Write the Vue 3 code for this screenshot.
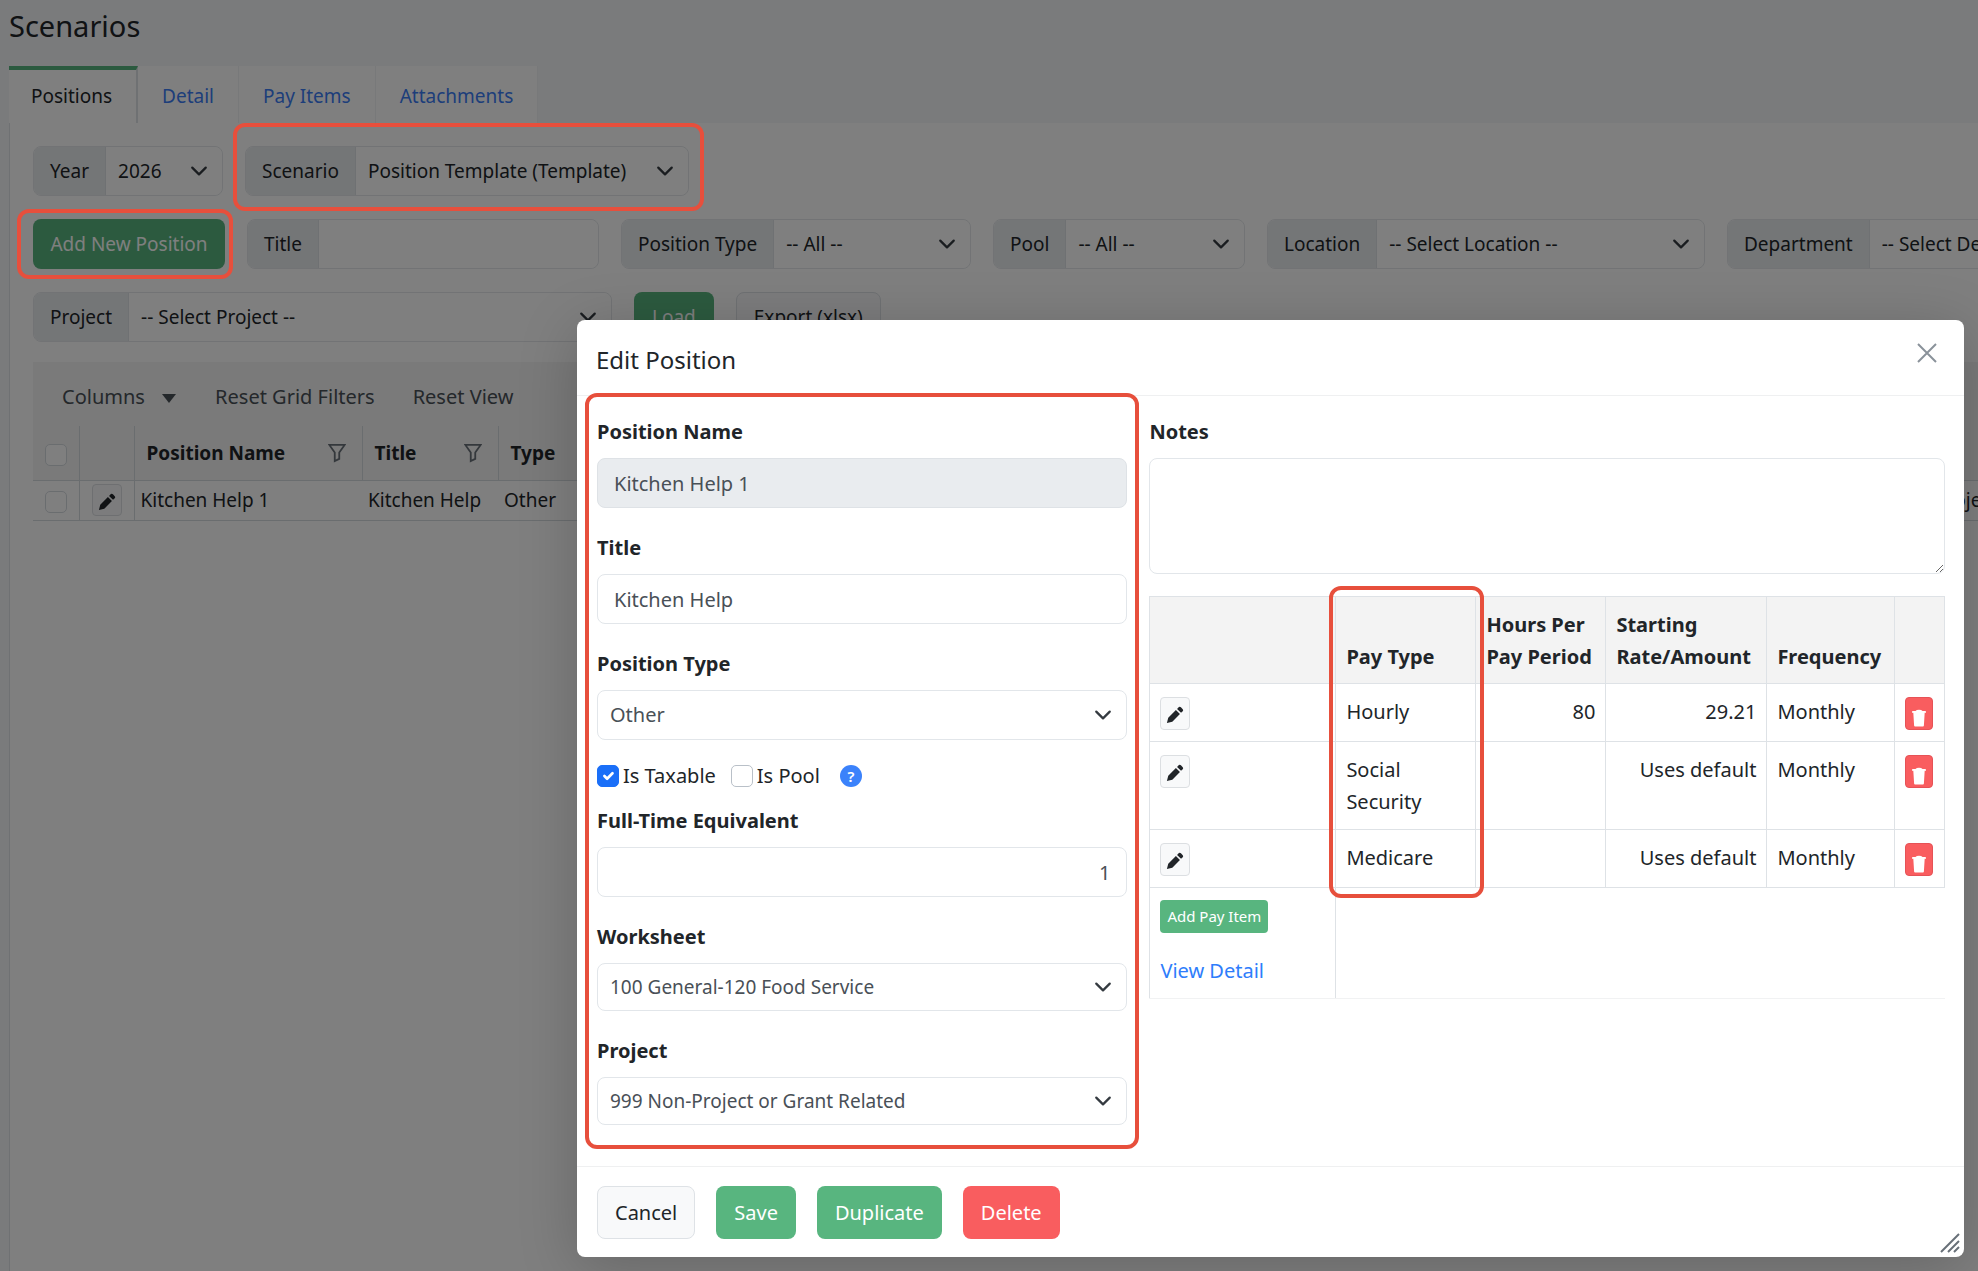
<script setup>
import { ref } from 'vue'

const tabs = ['Positions', 'Detail', 'Pay Items', 'Attachments']
const activeTab = ref('Positions')

const taxable = ref(true)
const pool = ref(false)
const title = ref('Kitchen Help')
const fte = ref('1')
const notes = ref('')

const payItems = [
  { type: 'Hourly', hours: '80', rate: '29.21', frequency: 'Monthly' },
  { type: 'Social Security', hours: '', rate: 'Uses default', frequency: 'Monthly' },
  { type: 'Medicare', hours: '', rate: 'Uses default', frequency: 'Monthly' }
]
</script>

<template>
  <div class="page">
    <h1>Scenarios</h1>
    <nav class="tabs">
      <a v-for="t in tabs" :key="t" href="#" :class="['tab', { active: t === activeTab }]" @click.prevent="activeTab = t">{{ t }}</a>
    </nav>

    <main class="panel">
      <div class="row">
        <div class="group year">
          <label for="year">Year</label>
          <select id="year"><option>2026</option></select>
        </div>
        <div class="group scenario">
          <label for="scenario">Scenario</label>
          <select id="scenario"><option>Position Template (Template)</option></select>
          <span class="mark mark-scenario"></span>
        </div>
      </div>

      <div class="row">
        <div class="add">
          <button type="button" class="btn green">Add New Position</button>
          <span class="mark mark-add"></span>
        </div>
        <div class="group title">
          <label for="f-title">Title</label>
          <input id="f-title" type="text">
        </div>
        <div class="group ptype">
          <label for="f-type">Position Type</label>
          <select id="f-type"><option>-- All --</option></select>
        </div>
        <div class="group pool">
          <label for="f-pool">Pool</label>
          <select id="f-pool"><option>-- All --</option></select>
        </div>
        <div class="group location">
          <label for="f-location">Location</label>
          <select id="f-location"><option>-- Select Location --</option></select>
        </div>
        <div class="group department">
          <label for="f-department">Department</label>
          <select id="f-department"><option>-- Select Department --</option></select>
        </div>
      </div>

      <div class="row">
        <div class="group project">
          <label for="f-project">Project</label>
          <select id="f-project"><option>-- Select Project --</option></select>
        </div>
        <button type="button" class="btn green">Load</button>
        <button type="button" class="btn light">Export (xlsx)</button>
      </div>

      <div class="toolbar">
        <button type="button" class="plain">Columns
          <svg width="16" height="10" viewBox="0 0 16 10"><path d="M1 0h14L8 9z" fill="currentColor" /></svg>
        </button>
        <button type="button" class="plain">Reset Grid Filters</button>
        <button type="button" class="plain">Reset View</button>
      </div>
      <table class="grid">
        <thead>
          <tr>
            <th class="c-check"><input type="checkbox" aria-label="Select all"></th>
            <th class="c-edit"></th>
            <th class="c-name"><span class="head">Position Name
              <svg width="18" height="20" viewBox="0 0 20 21"><path d="M1.500 1.500h17l-6 8.500v7l-5 2.500V10z" /></svg></span></th>
            <th class="c-title"><span class="head">Title
              <svg width="18" height="20" viewBox="0 0 20 21"><path d="M1.500 1.500h17l-6 8.500v7l-5 2.500V10z" /></svg></span></th>
            <th class="c-type"><span class="head">Type</span></th>
            <th class="c-project"></th>
          </tr>
        </thead>
        <tbody>
          <tr>
            <td class="c-check"><input type="checkbox" aria-label="Select row"></td>
            <td class="c-edit">
              <button type="button" class="icon" aria-label="Edit">
                <svg width="18" height="18" viewBox="0 0 20 20"><path d="M1 19l1.500-6L11 4.500l4.500 4.500L7 17.500zM12.300 3.200l2-2q1.200-.8 2.300.3l2 2q1 1.200 0 2.200l-1.900 1.900z" fill="currentColor" /></svg>
              </button>
            </td>
            <td>Kitchen Help 1</td>
            <td>Kitchen Help</td>
            <td>Other</td>
            <td>999 Non-Project</td>
          </tr>
        </tbody>
      </table>
    </main>

    <div class="backdrop">
      <section class="modal" role="dialog" aria-labelledby="modal-title">
        <header>
          <h2 id="modal-title">Edit Position</h2>
          <button type="button" class="close" aria-label="Close">
            <svg width="20" height="20" viewBox="0 0 20 20"><path d="M1 1l18 18M19 1L1 19" stroke="currentColor" stroke-width="2" /></svg>
          </button>
        </header>

        <div class="body">
          <form class="form" @submit.prevent>
            <span class="mark mark-form"></span>
            <div class="field">
              <label for="name">Position Name</label>
              <input id="name" type="text" value="Kitchen Help 1" readonly>
            </div>
            <div class="field">
              <label for="title">Title</label>
              <input id="title" v-model="title" type="text">
            </div>
            <div class="field">
              <label for="type">Position Type</label>
              <select id="type"><option>Other</option></select>
            </div>
            <div class="checks">
              <label><input v-model="taxable" type="checkbox">Is Taxable</label>
              <label><input v-model="pool" type="checkbox">Is Pool</label>
              <button type="button" class="help" aria-label="Help">?</button>
            </div>
            <div class="field">
              <label for="fte">Full-Time Equivalent</label>
              <input id="fte" v-model="fte" type="text" class="num">
            </div>
            <div class="field">
              <label for="worksheet">Worksheet</label>
              <select id="worksheet" class="compact"><option>100 General-120 Food Service</option></select>
            </div>
            <div class="field">
              <label for="project">Project</label>
              <select id="project" class="compact"><option>999 Non-Project or Grant Related</option></select>
            </div>
          </form>

          <div class="side">
            <div class="field notes">
              <label for="notes">Notes</label>
              <textarea id="notes" v-model="notes"></textarea>
            </div>
            <div class="pay-wrap">
              <table class="pay">
                <colgroup>
                  <col class="w-edit"><col class="w-type"><col class="w-hours"><col class="w-rate"><col class="w-freq"><col>
                </colgroup>
                <thead>
                  <tr>
                    <th></th>
                    <th>Pay Type</th>
                    <th>Hours Per Pay Period</th>
                    <th>Starting Rate/Amount</th>
                    <th>Frequency</th>
                    <th></th>
                  </tr>
                </thead>
                <tbody>
                  <tr v-for="p in payItems" :key="p.type">
                    <td class="act">
                      <button type="button" class="icon" aria-label="Edit">
                        <svg width="18" height="18" viewBox="0 0 20 20"><path d="M1 19l1.500-6L11 4.500l4.500 4.500L7 17.500zM12.300 3.200l2-2q1.200-.8 2.300.3l2 2q1 1.200 0 2.200l-1.900 1.900z" fill="currentColor" /></svg>
                      </button>
                    </td>
                    <td>{{ p.type }}</td>
                    <td class="num">{{ p.hours }}</td>
                    <td class="num">{{ p.rate }}</td>
                    <td>{{ p.frequency }}</td>
                    <td class="act">
                      <button type="button" class="trash" aria-label="Delete">
                        <svg width="16" height="18" viewBox="0 0 16 18"><path d="M1 3q0-.8.800-1H4.500q1-1.300 3.500-1.300t3.500 1.300h2.700q.8.200.8 1v.8H1zM2.300 3.500h11.400l-.8 13q0 1-1 1H4.100q-1 0-1-1z" fill="#fff" /></svg>
                      </button>
                    </td>
                  </tr>
                </tbody>
                <tfoot>
                  <tr>
                    <td>
                      <button type="button" class="add-item">Add Pay Item</button>
                      <a href="#" @click.prevent>View Detail</a>
                    </td>
                    <td colspan="5"></td>
                  </tr>
                </tfoot>
              </table>
              <span class="mark mark-pay"></span>
            </div>
          </div>
        </div>

        <footer>
          <button type="button" class="btn light">Cancel</button>
          <button type="button" class="btn green">Save</button>
          <button type="button" class="btn green">Duplicate</button>
          <button type="button" class="btn red">Delete</button>
          <svg class="grip" width="20" height="20" viewBox="0 0 20 20"><path d="M1 19L19 1M8 19L19 8M14 19l5-5" stroke="#687078" stroke-width="2" /></svg>
        </footer>
      </section>
    </div>
  </div>
</template>

<style>
body {
  margin: 0;
}
</style>

<style scoped>
* {
  box-sizing: border-box;
}

.page {
  position: relative;
  min-height: 100vh;
  padding: 8px 0 0 9px;
  overflow: hidden;
  background: #f4f6f9;
  color: #212529;
  font: 19px/32px "Noto Sans", "Open Sans", sans-serif;
  display: flex;
  flex-direction: column;
}

button, input, select, textarea {
  font: inherit;
  color: inherit;
  margin: 0;
}

h1 {
  margin: 0 0 22px;
  font-size: 29px;
  line-height: 36px;
  font-weight: 400;
}

.tabs {
  display: flex;
}

.tab {
  height: 57px;
  padding: 14px 24px 0;
  background: #fff;
  border-right: 1px solid #f0f2f4;
  color: #3b7cf5;
  text-decoration: none;
  line-height: 32px;
}

.tab.active {
  padding-top: 10px;
  padding-left: 22px;
  border-top: 4px solid #57b47e;
  border-right: 2px solid #dee2e6;
  color: #212529;
}

.panel {
  flex: 1;
  padding: 23px 0 0 23px;
  background: #fff;
  border-left: 1px solid #dee2e6;
}

.row {
  display: flex;
  gap: 22px;
  height: 50px;
  margin-bottom: 23px;
}

.group {
  position: relative;
  flex: none;
  display: flex;
  border: 1px solid #e4e7ea;
  border-radius: 8px;
}

.group label {
  flex: none;
  padding: 0 16px;
  line-height: 48px;
  background: #e9ecef;
  border-right: 1px solid #dee2e6;
  border-radius: 7px 0 0 7px;
}

.group select,
.group input {
  flex: 1;
  min-width: 0;
  height: 48px;
  padding: 0 12px;
  border: 0;
  border-radius: 0 8px 8px 0;
  background-color: #fff;
}

select {
  appearance: none;
  background-image: url("data:image/svg+xml,%3Csvg xmlns='http://www.w3.org/2000/svg' viewBox='0 0 16 16'%3E%3Cpath fill='none' stroke='%23343a40' stroke-linecap='round' stroke-linejoin='round' stroke-width='2' d='m2 5 6 6 6-6'/%3E%3C/svg%3E");
  background-repeat: no-repeat;
  background-position: right 14px center;
  background-size: 18px 18px;
}

.year { width: 190px; }
.scenario { width: 444px; }
.title { width: 352px; }
.ptype { width: 350px; }
.pool { width: 252px; }
.location { width: 438px; }
.department { width: 440px; }
.project { width: 579px; }

.add {
  position: relative;
  flex: none;
  width: 192px;
}

.btn {
  flex: none;
  height: 50px;
  padding: 0 17px;
  border: 1px solid transparent;
  border-radius: 8px;
  white-space: nowrap;
}

.add .btn {
  width: 100%;
  padding: 0;
}

.green {
  background: #58b57f;
  color: #fff;
}

.red {
  background: #f95d5f;
  color: #fff;
}

.light {
  background: #f8f9fa;
  border-color: #dee2e6;
}

.toolbar {
  display: flex;
  gap: 38px;
  height: 64px;
  margin-top: -3px;
  padding: 6px 29px 0;
  background: #f4f4f4;
  font-size: 20px;
}

.plain {
  padding: 0;
  border: 0;
  background: none;
  color: #495057;
}

.plain svg {
  margin-left: 11px;
}

.grid {
  width: 2100px;
  table-layout: fixed;
  border-collapse: collapse;
  line-height: 30px;
}

.grid th {
  height: 54px;
  padding: 0 16px 0 12px;
  background: #f4f4f4;
  border: 1px solid #d5dadf;
  border-width: 0 1px 1px 0;
  text-align: left;
  font-weight: 700;
}

.grid td {
  height: 40px;
  padding: 0 6px;
  border: 1px solid #d5dadf;
  border-width: 0 0 1px;
  white-space: nowrap;
}

.grid .c-check,
.grid .c-edit {
  border-right-width: 1px;
  padding: 0;
  text-align: center;
}

.c-check { width: 46px; }
.c-edit { width: 55px; }
.c-name { width: 228px; }
.c-title { width: 136px; }
.c-type { width: 1350px; }

.head {
  display: flex;
  align-items: center;
  justify-content: space-between;
}

.head svg {
  fill: none;
  stroke: #687078;
  stroke-width: 2;
}

input[type="checkbox"] {
  appearance: none;
  width: 22px;
  height: 22px;
  border: 1px solid #b9c0c8;
  border-radius: 5px;
  background: #fff;
  vertical-align: middle;
}

.grid input[type="checkbox"] {
  border-color: #d5dadf;
}

input[type="checkbox"]:checked {
  border-color: #1a6ff8;
  background: #1a6ff8 url("data:image/svg+xml,%3Csvg xmlns='http://www.w3.org/2000/svg' viewBox='0 0 20 20'%3E%3Cpath fill='none' stroke='%23fff' stroke-linecap='round' stroke-linejoin='round' stroke-width='3' d='m6 10 3 3 6-6'/%3E%3C/svg%3E") center / 18px 18px no-repeat;
}

.icon {
  display: inline-flex;
  align-items: center;
  justify-content: center;
  width: 30px;
  height: 32px;
  padding: 3px 0 0;
  border: 1px solid #dcdfe2;
  border-radius: 4px;
  background: #f8f9fa;
  vertical-align: top;
}

.backdrop {
  position: absolute;
  inset: 0;
  z-index: 10;
  padding: 320px 14px 0 577px;
  background: rgba(0, 0, 0, 0.5);
}

.modal {
  background: #fff;
  border-radius: 8px;
  box-shadow: 0 10px 60px rgba(0, 0, 0, 0.2);
  font-size: 20px;
}

.modal header {
  display: flex;
  justify-content: space-between;
  height: 76px;
  padding: 22px 27px 0 19px;
  border-bottom: 1px solid #eff0f1;
}

h2 {
  margin: 0;
  font-size: 24px;
  line-height: 36px;
  font-weight: 400;
}

.close {
  height: 20px;
  margin-top: 1px;
  padding: 0;
  border: 0;
  background: none;
  color: #8a929a;
  line-height: 0;
}

.body {
  display: grid;
  grid-template-columns: minmax(0, 2fr) minmax(0, 3fr);
  gap: 22px;
  padding: 21px 19px 16px 20px;
}

.form {
  position: relative;
}

.field {
  margin-bottom: 25px;
}

.field label {
  display: block;
  margin-bottom: 11px;
  line-height: 30px;
  font-weight: 700;
}

.field input,
.field select,
.field textarea {
  display: block;
  width: 100%;
  height: 50px;
  padding: 0 16px;
  border: 1px solid #e2e6ea;
  border-radius: 8px;
  background-color: #fff;
  color: #495057;
}

.field input[readonly] {
  background: #e9ecef;
  border-color: #dee2e6;
}

.field select {
  padding: 0 12px;
}

.field .compact {
  height: 48px;
  font-size: 19px;
}

.num {
  text-align: right;
}

.checks {
  display: flex;
  align-items: center;
  gap: 15px;
  height: 22px;
  margin-bottom: 19px;
}

.checks label {
  display: flex;
  align-items: center;
  gap: 4px;
}

.help {
  width: 22px;
  height: 22px;
  margin-left: 5px;
  padding: 0;
  border: 0;
  border-radius: 50%;
  background: #3b82fb;
  color: #fff;
  font-size: 15px;
  line-height: 22px;
  font-weight: 600;
}

.notes {
  margin-bottom: 22px;
}

.field textarea {
  height: 116px;
  resize: vertical;
}

.pay-wrap {
  position: relative;
}

.pay {
  width: 100%;
  table-layout: fixed;
  border-collapse: collapse;
}

.w-edit { width: 186px; }
.w-type { width: 140px; }
.w-hours { width: 130px; }
.w-rate { width: 161px; }
.w-freq { width: 128px; }

.pay th,
.pay td {
  padding: 12px 10px 11px;
  border: 1px solid #dee2e6;
  vertical-align: top;
  text-align: left;
}

.pay th {
  padding-bottom: 10px;
  background: #f3f3f3;
  vertical-align: bottom;
  font-weight: 700;
}

.pay td.num {
  text-align: right;
}

.pay td.act {
  padding-top: 13px;
  line-height: 0;
}

.pay .icon,
.trash {
  height: 33px;
}

.trash {
  width: 28px;
  padding: 8px 0 0;
  border: 1px solid #e65256;
  border-radius: 4px;
  background: #f95d5f;
  line-height: 0;
}

.pay tfoot td {
  height: 111px;
  border-width: 0 0 1px 1px;
  border-bottom-color: #f1f2f3;
}

.add-item {
  display: block;
  height: 33px;
  margin: 0 0 22px;
  padding: 0 7px;
  border: 0;
  border-radius: 4px;
  background: #58b57f;
  color: #fff;
  font-size: 15px;
  line-height: 33px;
}

.pay a {
  color: #2e7dfb;
  text-decoration: none;
}

.modal footer {
  position: relative;
  display: flex;
  gap: 21px;
  height: 91px;
  padding: 19px 20px;
  border-top: 1px solid #eff0f1;
}

.modal footer .btn {
  height: 53px;
}

.grip {
  position: absolute;
  right: 4px;
  bottom: 4px;
}

.mark {
  position: absolute;
  z-index: 20;
  border: 4px solid #e74f3c;
  border-radius: 12px;
  pointer-events: none;
}

.mark-scenario { inset: -24px -16px -16px -13px; }
.mark-add { inset: -10px -8px -10px -16px; }
.mark-form { inset: -24px -12px 1px; }
.mark-pay { top: -10px; bottom: 101px; left: 180px; width: 155px; }
</style>
